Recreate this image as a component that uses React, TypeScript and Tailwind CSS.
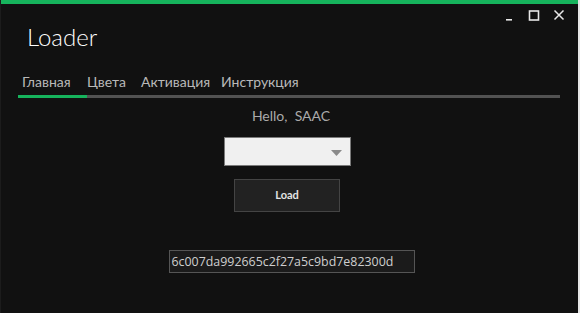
import React from "react";

const tabs = [
  { label: "Главная", w: "w-[65px]" },
  { label: "Цвета", w: "w-[54px]" },
  { label: "Активация", w: "w-[80px]" },
  { label: "Инструкция", w: "" },
];

export default function App() {
  return (
    <div
      className="flex w-[580px] h-[313px] bg-[#e6e6e6] overflow-hidden"
      style={{ fontFamily: 'Lato, "Noto Sans", sans-serif' }}
    >
      <div className="flex flex-col w-[578px] h-[313px] bg-[#111111] border-l border-[#1c1c1c]">
        <div className="h-[4px] bg-[#16b35c]" />

        {/* header */}
        <div className="flex justify-between">
          <div className="pl-[26px] pt-[16px] text-[24px] leading-[33px] font-light text-white">
            Loader
          </div>
          <div className="flex items-start gap-[13px] pr-[13px] pt-[5px] text-[#e8e8e8]">
            <svg width="12" height="14" viewBox="0 0 12 14">
              <rect x="3" y="10" width="6" height="1.6" fill="currentColor" />
            </svg>
            <svg width="12" height="14" viewBox="0 0 12 14">
              <rect x="1.5" y="2" width="9" height="9" fill="none" stroke="currentColor" strokeWidth="1.6" />
            </svg>
            <svg width="12" height="14" viewBox="0 0 12 14">
              <path d="M1.5 1.5 L10.5 10.5 M10.5 1.5 L1.5 10.5" stroke="currentColor" strokeWidth="1.5" />
            </svg>
          </div>
        </div>

        {/* tabs */}
        <div className="flex pl-[21px] pt-[19px] text-[14px] leading-[19px] text-[#b9b9b9]">
          {tabs.map((t) => (
            <span key={t.label} className={t.w}>
              {t.label}
            </span>
          ))}
        </div>
        <div className="flex ml-[17px] mt-[4px] w-[542px] h-[3px] bg-[#525252]">
          <div className="w-[69px] bg-[#16b35c]" />
        </div>

        {/* main */}
        <div className="flex flex-col items-center w-[572px] pt-[8px]">
          <div className="text-[14px] leading-[19px] text-[#aaaaaa] pl-[8px]">Hello,&nbsp; SAAC</div>
          <div className="relative mt-[12px] w-[127px] h-[29px] bg-[#f0f0f0] border border-[#7a7a7a]">
            <svg
              className="absolute right-[8px] top-[12px]"
              width="11"
              height="6"
              viewBox="0 0 11 6"
            >
              <path d="M0 0 H11 L5.5 6 Z" fill="#8a8a8a" />
            </svg>
          </div>
          <button className="mt-[13px] w-[106px] h-[33px] bg-[#222222] border border-[#444444] text-[11px] font-bold text-[#e4e4e4]">
            Load
          </button>
          <div
            className="ml-[9px] mt-[38px] w-[246px] h-[23px] bg-[#1b1b1b] border border-[#555555] pl-[2px] text-[12.4px] leading-[21px] text-[#cfcfcf]"
            style={{ fontFamily: '"Open Sans", sans-serif' }}
          >
            6c007da992665c2f27a5c9bd7e82300d
          </div>
        </div>
      </div>
    </div>
  );
}
